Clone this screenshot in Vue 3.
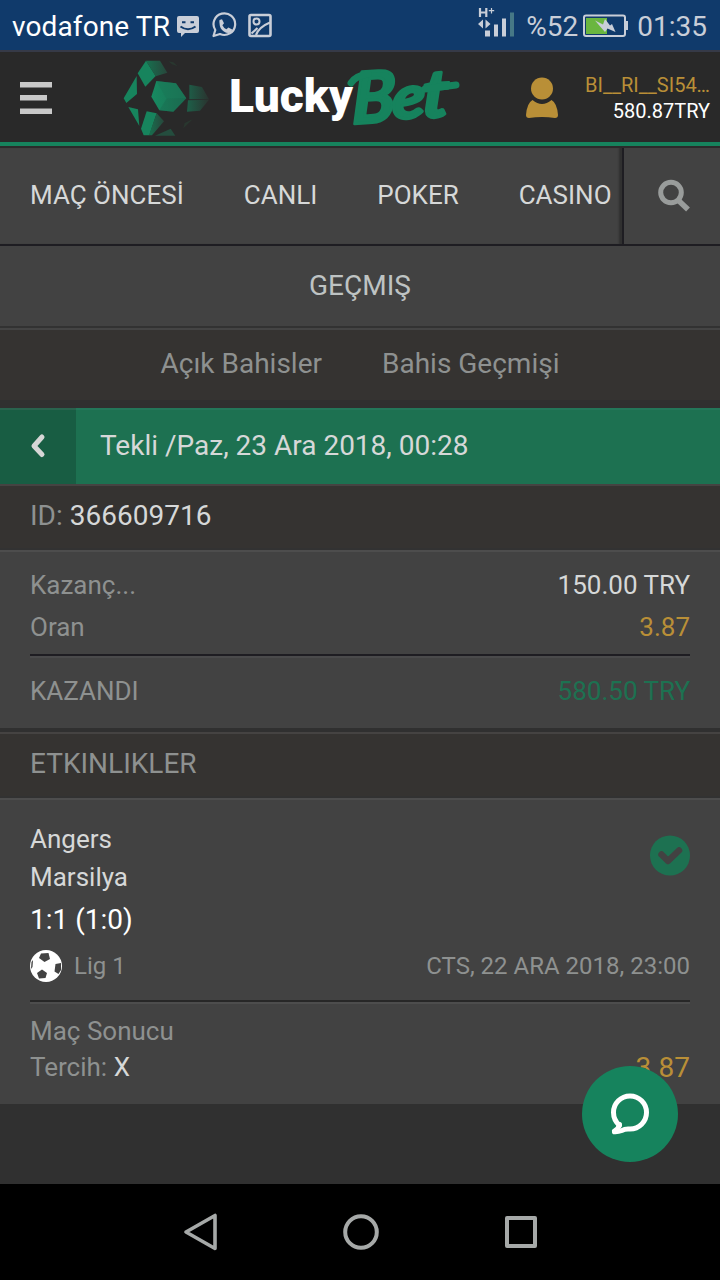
<script setup>
const nav = ['MAÇ ÖNCESİ', 'CANLI', 'POKER', 'CASINO']
const tabs = ['Açık Bahisler', 'Bahis Geçmişi']
</script>

<template>
  <div class="screen">
    <div class="status">
      <span class="carrier">vodafone TR</span>
      <svg class="notif" width="98" height="30" viewBox="0 0 98 30" fill="none">
        <path d="M3 4h18a2 2 0 0 1 2 2v13a2 2 0 0 1-2 2H9l-4 4v-4H3a2 2 0 0 1-2-2V6a2 2 0 0 1 2-2z" fill="#c9ced8" />
        <path d="M6 10.300h3.500M14.500 10.300h3.500M4.500 14.500Q12 20 19.500 14.500" stroke="#103a6b" stroke-width="2" />
        <path d="M37.500 24l1.800-6A10.800 10.800 0 1 1 44 22z" stroke="#c9ced8" stroke-width="2.200" stroke-linejoin="round" />
        <path d="M43.500 8l2.500-.8 2 4-1.600 2q1.300 2.800 4 4l2-1.800 3.800 2-.8 2.600q-3.300 2.400-7.500-.5t-4.300-7.500q-.4-2.600-.1-4z" fill="#c9ced8" />
        <rect x="73.500" y="3" width="21" height="21" rx="1.500" stroke="#c9ced8" stroke-width="2.600" />
        <circle cx="80.500" cy="9.500" r="3" stroke="#c9ced8" stroke-width="2" />
        <path d="M80 23Q83 15 94 10.500M75.500 21.500L81.500 16" stroke="#c9ced8" stroke-width="2.200" />
      </svg>
      <span class="spacer"></span>
      <svg class="signal" width="38" height="32" viewBox="0 0 38 32">
        <path d="M2 1v9M8.300 1v9M2 5.500h6.300" stroke="#c9ced8" stroke-width="2.200" fill="none" />
        <path d="M13.500 1v5.500M10.800 3.700h5.400" stroke="#c9ced8" stroke-width="1.200" />
        <path d="M0 17l5-4.500v9zM12.500 17l-5-4.500v9z" fill="#c9ced8" />
        <path d="M7 23.500h5v6H7zM16 17.500h4v12h-4zM24 11.500h4v18h-4z" fill="#c9ced8" />
        <path d="M32 5.500h4v24h-4z" fill="#467886" />
      </svg>
      <span class="pct">%52</span>
      <svg class="battery" width="46" height="24" viewBox="0 0 46 24">
        <rect x="1" y="1.500" width="41" height="20.500" rx="2" fill="none" stroke="#c9ced8" stroke-width="2" />
        <path d="M43 7h2v9h-2z" fill="#c9ced8" />
        <path d="M3 4h21v16H3z" fill="#6ab63f" />
        <path d="M12 6.500L20 10.500 22 5 27 11.500 29 10 32.500 18 24.500 14.500 22 18 18 13.500z" fill="#c9ced8" />
      </svg>
      <span class="clock">01:35</span>
    </div>

    <header class="header">
      <svg class="menu" width="32" height="34" viewBox="0 0 32 34" fill="#c8c8c8">
        <path d="M0 1h32v5.500H0zM0 14h27v5.500H0zM0 27.500h32V33H0z" />
      </svg>
      <svg class="logo" width="360" height="90" viewBox="110 52 360 90">
        <defs>
          <linearGradient id="fadeRight"><stop offset="0" stop-color="#1d6049" /><stop offset="1" stop-color="#2a332f" /></linearGradient>
          <linearGradient id="fadeTop"><stop offset="0" stop-color="#17704f" /><stop offset="1" stop-color="#28463b" /></linearGradient>
          <linearGradient id="core"><stop offset="0" stop-color="#178a61" /><stop offset="1" stop-color="#1c6f53" /></linearGradient>
        </defs>
        <g transform="translate(110 50) scale(.33333)">
          <path d="M83 70L108 32 137 78 106 110z" fill="#17845d" />
          <path d="M108 32H150L172 68 137 79z" fill="url(#fadeTop)" />
          <path d="M80 78L81 132 49 159 41 145zM55 171L84 178 88 228z" fill="#17845d" />
          <path d="M110 184L140 190 118 256H101L93 236z" fill="#17845d" />
          <path d="M140 190L162 214 126 256H117z" fill="url(#fadeTop)" />
          <path d="M139 93L198 100 229 145 190 185 148 181 124 140z" fill="url(#core)" />
          <path d="M139 93L198 100 229 145 170 146z" fill="#197555" opacity=".5" />
          <path d="M170 146L229 145 190 185 148 181z" fill="#195f48" opacity=".3" />
          <path d="M238 104L276 111 297 148H238zM234 151L297 149 270 182 231 185z" fill="url(#fadeRight)" />
          <path d="M135 257L182 236 196 257z" fill="#244d3e" />
          <path d="M175 34L190 37 203 49 186 43zM220 235L224 219 248 208z" fill="#29372f" />
        </g>
        <text class="lucky" x="229" y="112" textLength="124" lengthAdjust="spacingAndGlyphs">Lucky</text>
        <g transform="translate(352 124) rotate(-4) skewX(-5)">
          <text class="bet big" x="0" y="0" textLength="43" lengthAdjust="spacingAndGlyphs">B</text>
          <text class="bet" x="40" y="-2" textLength="33" lengthAdjust="spacingAndGlyphs">e</text>
          <text class="bet tee" x="70" y="-1" textLength="27" lengthAdjust="spacingAndGlyphs">t</text>
        </g>
        <path class="flourish" d="M351 83Q355 76 368 74M425 89Q440 87 456 85" />
      </svg>
      <svg class="avatar" width="34" height="42" viewBox="0 0 34 42" fill="#b98f37">
        <circle cx="17" cy="11.500" r="11" />
        <path d="M7.500 23Q17 31 26.500 23Q32 26 33 38Q33 41 30 41Q17 39 4 41Q1 41 1 38Q2 26 7.500 23z" />
      </svg>
      <div class="account">
        <span class="user">BI__RI__SI54…</span>
        <span>580.87TRY</span>
      </div>
    </header>

    <nav class="nav">
      <div class="links"><span v-for="n in nav" :key="n">{{ n }}</span></div>
      <div class="search">
        <svg width="34" height="34" viewBox="0 0 34 34" fill="none" stroke="#999c9b">
          <circle cx="14" cy="13.500" r="10.300" stroke-width="5" />
          <path d="M21.500 21.500L31 30.500" stroke-width="5.500" />
        </svg>
      </div>
    </nav>

    <div class="title">GEÇMIŞ</div>
    <div class="tabs"><span v-for="t in tabs" :key="t">{{ t }}</span></div>

    <div class="coupon">
      <div class="back">
        <svg width="16" height="26" viewBox="0 0 16 26"><path d="M12 4L4 13l8 8.500" fill="none" stroke="#d6d6d6" stroke-width="5" stroke-linecap="round" stroke-linejoin="round" /></svg>
      </div>
      <span class="coupon-title">Tekli /Paz, 23 Ara 2018, 00:28</span>
    </div>
    <div class="strip id"><span class="muted">ID:</span>&nbsp;<span class="id-value">366609716</span></div>

    <section class="summary">
      <div class="row"><span class="muted">Kazanç...</span><span class="light">150.00 TRY</span></div>
      <div class="row"><span class="muted">Oran</span><span class="gold">3.87</span></div>
      <div class="rule"></div>
      <div class="row won"><span class="muted">KAZANDI</span><span class="green">580.50 TRY</span></div>
    </section>

    <div class="strip events">ETKINLIKLER</div>

    <section class="event">
      <div class="match">
        <div class="teams">
          <div class="team">Angers</div>
          <div class="team">Marsilya</div>
          <div class="score">1:1 (1:0)</div>
        </div>
        <svg class="check" width="40" height="41" viewBox="0 0 40 41">
          <circle cx="20" cy="20.500" r="20" fill="#1d7151" />
          <path d="M11.500 19.500L18 26 29 15.500" fill="none" stroke="#424242" stroke-width="6.500" stroke-linejoin="round" stroke-linecap="round" />
        </svg>
      </div>
      <div class="league">
        <svg width="32" height="32" viewBox="0 0 32 32">
          <circle cx="16" cy="16" r="16" fill="#fff" />
          <path d="M11 3.500L18.500 3 20 9 14.500 12 9 8zM25.500 14L31 13V20L28.500 24 24.500 21.500zM7 23L12 19.500 17 23 15.500 28 9 28.500zM1.500 12L3 10 2.500 17 1 19z" fill="#424242" />
        </svg>
        <span>Lig 1</span>
        <span class="date">CTS, 22 ARA 2018, 23:00</span>
      </div>
      <div class="rule soft"></div>
      <div class="market">Maç Sonucu</div>
      <div class="market pick"><span>Tercih: <b>X</b></span><span class="gold odd">3.87</span></div>
    </section>

    <div class="chat">
      <svg width="44" height="44" viewBox="0 0 44 44" fill="none">
        <path d="M12.500 34.500Q6.500 29 6.500 21.500A16.500 16.500 0 1 1 23 38Q18 37.500 15 39.500Q11 41 7.500 40.800" stroke="#fff" stroke-width="5" stroke-linecap="round" />
        <path d="M12.500 33.500Q12 37 7.500 40" stroke="#fff" stroke-width="5" stroke-linecap="round" />
      </svg>
    </div>

    <div class="sysnav">
      <svg width="720" height="96" viewBox="0 0 720 96" fill="none" stroke="#a6a9a8" stroke-width="4" stroke-linejoin="round">
        <path d="M215 31.500V64.500L186 48z" stroke-width="3.600" />
        <circle cx="361" cy="48" r="15.800" />
        <path d="M507 34h28v28h-28z" />
      </svg>
    </div>
  </div>
</template>

<style>
html, body { background: #303030; }
</style>

<style scoped>
.screen {
  width: 720px;
  height: 1280px;
  box-sizing: border-box;
  display: flex;
  flex-direction: column;
  position: relative;
  overflow: hidden;
  background: #303030;
  font-family: Roboto, "Noto Sans", sans-serif;
  font-size: 26px;
  color: #d6d8d8;
  white-space: nowrap;
}
.screen > * { flex: none; box-sizing: border-box; }
.spacer { flex: 1; }

.status {
  height: 52px;
  display: flex;
  align-items: center;
  padding: 2px 13px 0 12px;
  border-bottom: 2px solid #363a47;
  background: #103a6b;
  font-size: 28px;
  line-height: 48px;
}
.status > span { padding-top: 2px; }
.carrier { color: #fff; width: 164px; letter-spacing: .12px; }
.notif { margin-top: 2px; }
.pct, .clock { color: #c9ced8; }
.signal { margin: -7px 10px 0 0; }
.pct { width: 57px; }
.battery { margin-right: 8px; }

.header {
  height: 94px;
  margin-bottom: 2px;
  display: flex;
  align-items: center;
  padding: 0 10px 0 20px;
  background: #292929;
  border-bottom: 4px solid #16835d;
  box-shadow: 0 2px #2b2b2b;
}
.menu { margin-top: 2px; }
.logo { margin-left: 58px; }
.lucky { font: 900 47px Roboto, sans-serif; fill: #fff; }
.bet {
  font: italic 700 60px Lato, sans-serif;
  fill: #16835d;
  stroke: #16835d;
  stroke-width: 3px;
  stroke-linejoin: round;
}
.bet.big { font-size: 71px; }
.bet.tee { font-size: 66px; }
.flourish { fill: none; stroke: #16835d; stroke-width: 7px; stroke-linecap: round; }
.avatar { margin: 2px 0 0 55px; }
.account {
  flex: 1;
  display: flex;
  flex-direction: column;
  align-items: flex-end;
  font-size: 20px;
  line-height: 26px;
  color: #fff;
  margin-top: 1px;
}
.user { color: #b98f37; }

.nav {
  height: 98px;
  display: flex;
  background: #424242;
  border-bottom: 2px solid #1e1d22;
}
.links {
  width: 624px;
  box-sizing: border-box;
  display: flex;
  gap: 60px;
  padding-left: 30px;
  line-height: 94px;
  overflow: hidden;
  border-right: 2px solid #1e1d22;
  box-shadow: inset -4px 0 2px -1px #303030;
}
.search { flex: 1; display: flex; align-items: center; justify-content: center; padding-left: 4px; }

.title {
  height: 84px;
  text-align: center;
  font-size: 28px;
  line-height: 79px;
  color: #bec3c3;
  background: #424242;
  border-bottom: 2px solid #444;
  box-shadow: inset 0 -2px #323232;
}
.tabs {
  height: 78px;
  display: flex;
  justify-content: center;
  gap: 60px;
  font-size: 28px;
  line-height: 67px;
  color: #8e9190;
  background: #353331;
  border-bottom: 8px solid #303030;
}

.coupon {
  height: 76px;
  display: flex;
  background: #1d7151;
  box-shadow: inset 0 2px #23775a;
}
.back {
  width: 76px;
  display: flex;
  align-items: center;
  justify-content: center;
  background: #185d43;
  border-top: 2px solid #29634e;
  box-sizing: border-box;
  padding-bottom: 2px;
}
.coupon-title { padding-left: 24px; font-size: 28px; line-height: 75px; }

.strip {
  height: 68px;
  padding-left: 30px;
  font-size: 28px;
  line-height: 59px;
  background: #353331;
  border-top: 2px solid #454342;
  border-bottom: 2px solid #4d4d4d;
  box-shadow: inset 0 -2px #323232;
  color: #8e9190;
}
.muted { color: #8e9190; }
.light, .id-value { color: #d6d8d8; }
.gold { color: #b98f37; }
.green { color: #1d7151; }

.summary, .event { padding: 0 30px; background: #424242; }
.summary { height: 176px; padding-top: 12px; margin-bottom: 4px; }
.row { display: flex; justify-content: space-between; line-height: 42px; }
.rule { height: 2px; background: #1e1d22; box-shadow: 0 2px #4a4a4b; margin-top: 6px; }
.rule.soft { background: #272727; box-shadow: 0 2px #4d4d4d; margin-top: 15px; }
.won { margin-top: 14px; }

.event { height: 304px; padding-top: 20px; }
.match { display: flex; justify-content: space-between; }
.team { line-height: 38px; }
.score { font-size: 28px; line-height: 46px; color: #fff; padding-top: 1px; }
.check { margin-top: 15px; }
.league {
  display: flex;
  align-items: center;
  gap: 12px;
  height: 36px;
  margin-top: 6px;
  font-size: 24px;
  line-height: 34px;
  color: #8e9190;
}
.league > span { margin-top: -3px; }
.league svg { margin-top: -2px; }
.league .date { margin-left: auto; }
.market { color: #8e9190; line-height: 36px; margin-top: 11px; }
.market.pick { margin-top: 0; display: flex; justify-content: space-between; }
.market b { font-weight: 400; color: #d6d8d8; }
.odd { font-size: 28px; padding-top: 1px; }

.chat {
  position: absolute;
  left: 582px;
  top: 1066px;
  width: 96px;
  height: 96px;
  border-radius: 50%;
  background: #16835d;
  display: flex;
  align-items: center;
  justify-content: center;
}
.chat svg { margin: 0 2px 2px 0; }

.sysnav { height: 96px; margin-top: auto; background: #000; }
.sysnav svg { display: block; }
</style>
